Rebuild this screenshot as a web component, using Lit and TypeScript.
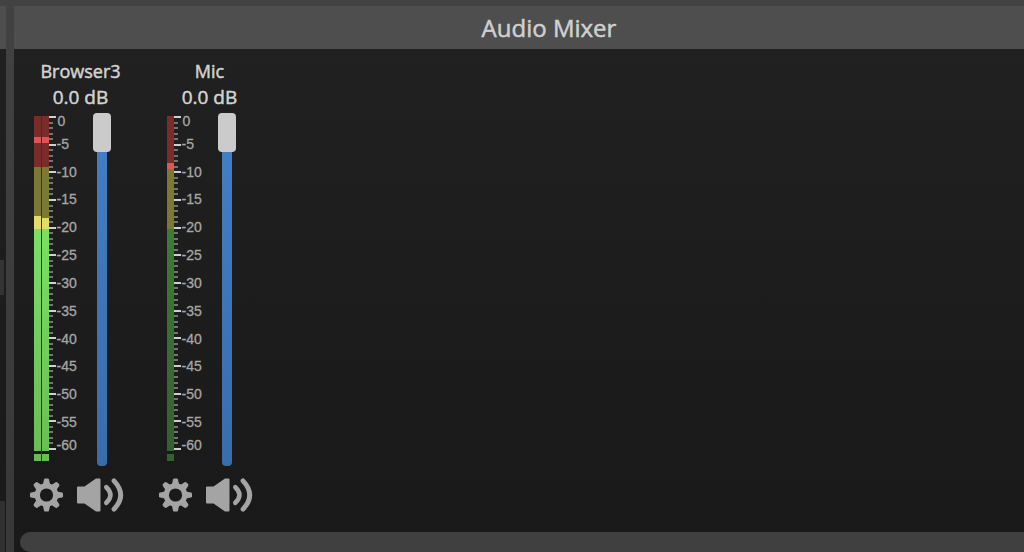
import { LitElement, html, svg, css } from "lit";
import { customElement, property } from "lit/decorators.js";

interface Segment {
  tone: string;
  size: number;
}

interface Channel {
  id: string;
  name: string;
  bars: Segment[][];
  dim: boolean;
}

const CHANNELS: Channel[] = [
  {
    id: "browser3",
    name: "Browser3",
    dim: false,
    bars: [
      [
        { tone: "red", size: 21 },
        { tone: "peak", size: 6 },
        { tone: "red", size: 24 },
        { tone: "olive", size: 49 },
        { tone: "yellow", size: 13 },
      ],
      [
        { tone: "red", size: 21 },
        { tone: "peak", size: 6 },
        { tone: "red", size: 24 },
        { tone: "olive", size: 51 },
        { tone: "yellow", size: 11 },
      ],
    ],
  },
  {
    id: "mic",
    name: "Mic",
    dim: true,
    bars: [
      [
        { tone: "red", size: 47 },
        { tone: "peak", size: 6 },
        { tone: "olive", size: 60 },
      ],
    ],
  },
];

const LABELS = Array.from({ length: 13 }, (_, i) => (i === 0 ? "0" : `-${i * 5}`));
const TICKS = Array.from({ length: 61 }, (_, i) => i % 5 === 0);
const TEETH = [0, 45, 90, 135, 180, 225, 270, 315];

@customElement("mixer-channel")
export class MixerChannel extends LitElement {
  @property({ attribute: false }) channel!: Channel;

  static styles = css`
    :host {
      display: flex;
      flex-direction: column;
      width: 129px;
      flex: none;
    }
    .name,
    .level {
      font-size: 18px;
      line-height: 26px;
      text-align: center;
      color: #d2d2d2;
      -webkit-text-stroke: 0.5px #d2d2d2;
    }
    .level {
      display: block;
      font-size: 19px;
    }
    .fader {
      display: flex;
      justify-content: center;
      padding-right: 17px;
      margin-top: 3px;
    }
    .bars {
      display: flex;
      padding-top: 3px;
    }
    .bar {
      display: flex;
      flex-direction: column;
      width: 7px;
      height: 345px;
    }
    .bar + .bar {
      border-left: 1px solid #2a3a24;
    }
    .red { background: #7a2c2b; }
    .peak { background: #de5553; }
    .olive { background: #7b7a34; }
    .yellow { background: #e2dc6b; }
    .green {
      flex: 1;
      background: linear-gradient(#7cdf63, #69bd55);
    }
    .foot {
      height: 7px;
      margin-top: 3px;
      background: #69bd55;
    }
    .dim .green { background: linear-gradient(#3d7b34, #356030); }
    .dim .foot { background: #356030; }
    .ticks {
      display: flex;
      flex-direction: column;
      justify-content: space-between;
      width: 8px;
      height: 334px;
      margin-top: 3px;
    }
    .tick {
      width: 4px;
      height: 2px;
      background: #747474;
    }
    .major {
      width: 7px;
      background: #cfcfcf;
    }
    .scale {
      display: flex;
      flex-direction: column;
      width: 36px;
      height: 334px;
      margin-top: 3px;
      font: 14px/10px "Liberation Sans", Arial, sans-serif;
      color: #a6a6a6;
      -webkit-text-stroke: 0.3px #a6a6a6;
    }
    .mark {
      flex: 2 1 0;
      display: flex;
      align-items: center;
    }
    .mark:first-child {
      flex: 1 1 0;
      align-items: flex-start;
      padding-left: 1px;
    }
    .mark:last-child {
      flex: 1 1 0;
      align-items: flex-end;
    }
    .slider {
      appearance: none;
      writing-mode: vertical-lr;
      direction: rtl;
      width: 18px;
      height: 353px;
      margin: 0;
      background: transparent;
    }
    .slider::-webkit-slider-runnable-track {
      width: 10px;
      height: 353px;
      border-radius: 4px;
      background: linear-gradient(#447fc6, #3a6cab);
    }
    .slider::-webkit-slider-thumb {
      appearance: none;
      width: 18px;
      height: 39px;
      margin-left: -4px;
      border-radius: 4px;
      background: #cbcbcb;
    }
    .controls {
      display: flex;
      gap: 14px;
      padding: 12px 0 0 14px;
    }
    button {
      display: flex;
      padding: 0;
      border: 0;
      background: none;
      color: #a4a4a4;
    }
    svg { display: block; }
  `;

  render() {
    const c = this.channel;
    return html`
      <label class="name" for=${c.id}>${c.name}</label>
      <output class="level" for=${c.id}>0.0 dB</output>
      <div class="fader">
        <div class="bars ${c.dim ? "dim" : ""}">
          ${c.bars.map(
            (bar) => html`<div class="bar">
              ${bar.map((s) => html`<div class=${s.tone} style="height:${s.size}px"></div>`)}
              <div class="green"></div>
              <div class="foot"></div>
            </div>`
          )}
        </div>
        <div class="ticks">
          ${TICKS.map((major) => html`<div class="tick ${major ? "major" : ""}"></div>`)}
        </div>
        <div class="scale">${LABELS.map((l) => html`<div class="mark">${l}</div>`)}</div>
        <input class="slider" id=${c.id} type="range" min="-60" max="0" value="0" />
      </div>
      <div class="controls">
        <button aria-label="${c.name} settings">
          <svg width="33" height="34" viewBox="-16.5 -17 33 34" fill="currentColor">
            <circle r="9.2" fill="none" stroke="currentColor" stroke-width="5.2" />
            ${TEETH.map(
              (a) => svg`<path d="M-3.6 -10.5L-2.5 -15.4Q-2.2 -16.6 -1.2 -16.6H1.2Q2.2 -16.6 2.5 -15.4L3.6 -10.5Z" transform="rotate(${a})" />`
            )}
          </svg>
        </button>
        <button aria-label="Mute ${c.name}">
          <svg width="47" height="34" viewBox="0 0 47 34" fill="currentColor">
            <path d="M1 8.5H7.5L19 0.5H22.5Q23.5 0.5 23.5 1.5V32.5Q23.5 33.5 22.5 33.5H19L7.5 25.5H1Q0 25.5 0 24.5V9.5Q0 8.5 1 8.5Z" />
            <g fill="none" stroke="currentColor" stroke-linecap="round">
              <path d="M29.3 9.2Q37.6 17 29.3 24.8" stroke-width="4.6" />
              <path d="M37 2.8Q50.4 17 37 31.2" stroke-width="4.8" />
            </g>
          </svg>
        </button>
      </div>
    `;
  }
}

@customElement("app-root")
export class AppRoot extends LitElement {
  static styles = css`
    :host {
      display: flex;
      box-sizing: border-box;
      height: 100vh;
      gap: 8px;
      padding-top: 6px;
      overflow: hidden;
      background: linear-gradient(#424242, #383838);
      font-family: "Open Sans", "Noto Sans", sans-serif;
    }
    .dock {
      display: flex;
      flex-direction: column;
      background: linear-gradient(#212121, #191919);
    }
    .side {
      width: 6px;
      flex: none;
    }
    .mixer {
      flex: 1;
      min-width: 0;
    }
    .bar {
      flex: none;
      height: 43px;
      background: #4e4e4e;
    }
    .title {
      box-sizing: border-box;
      margin: 0;
      padding-left: 60px;
      font-size: 24px;
      font-weight: 400;
      line-height: 43px;
      text-align: center;
      color: #d0d0d0;
      -webkit-text-stroke: 0.5px #d0d0d0;
    }
    .handle {
      width: 4px;
      height: 35px;
      margin-top: 211px;
      background: #343434;
    }
    .edge {
      width: 5px;
      flex: 1;
      margin-top: 206px;
      background: #303030;
    }
    .channels {
      display: flex;
      flex: 1;
      padding: 9px 0 0 2px;
    }
    .scroll {
      flex: none;
      height: 20px;
      margin-left: 6px;
      border-radius: 10px 0 0 10px;
      background: #404040;
    }
  `;

  render() {
    return html`
      <aside class="dock side">
        <div class="bar"></div>
        <div class="handle"></div>
        <div class="edge"></div>
      </aside>
      <main class="dock mixer">
        <h1 class="bar title">Audio Mixer</h1>
        <div class="channels">
          ${CHANNELS.map((c) => html`<mixer-channel .channel=${c}></mixer-channel>`)}
        </div>
        <div class="scroll"></div>
      </main>
    `;
  }
}
